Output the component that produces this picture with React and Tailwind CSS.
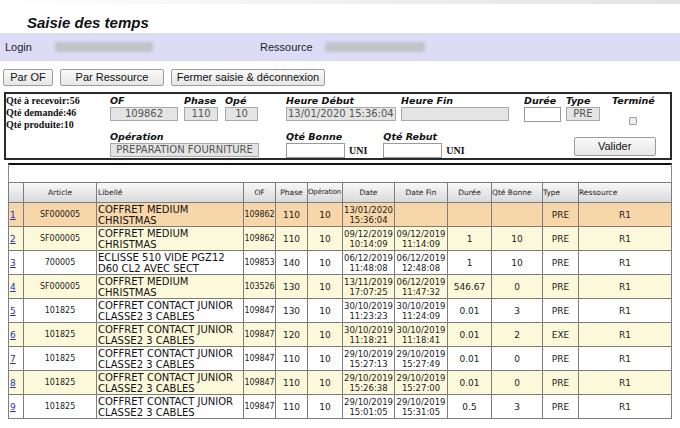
import React from "react";

const rows = [
  ["1", "SF000005", ["COFFRET MEDIUM", "CHRISTMAS"], "109862", "110", "10", ["13/01/2020", "15:36:04"], null, "", "", "PRE", "R1"],
  ["2", "SF000005", ["COFFRET MEDIUM", "CHRISTMAS"], "109862", "110", "10", ["09/12/2019", "10:14:09"], ["09/12/2019", "11:14:09"], "1", "10", "PRE", "R1"],
  ["3", "700005", ["ECLISSE 510 VIDE PGZ12", "D60 CL2 AVEC SECT"], "109853", "140", "10", ["06/12/2019", "11:48:08"], ["06/12/2019", "12:48:08"], "1", "10", "PRE", "R1"],
  ["4", "SF000005", ["COFFRET MEDIUM", "CHRISTMAS"], "103526", "130", "10", ["13/11/2019", "17:07:25"], ["06/12/2019", "11:47:32"], "546.67", "0", "PRE", "R1"],
  ["5", "101825", ["COFFRET CONTACT JUNIOR", "CLASSE2 3 CABLES"], "109847", "130", "10", ["30/10/2019", "11:23:23"], ["30/10/2019", "11:24:09"], "0.01", "3", "PRE", "R1"],
  ["6", "101825", ["COFFRET CONTACT JUNIOR", "CLASSE2 3 CABLES"], "109847", "120", "10", ["30/10/2019", "11:18:21"], ["30/10/2019", "11:18:41"], "0.01", "2", "EXE", "R1"],
  ["7", "101825", ["COFFRET CONTACT JUNIOR", "CLASSE2 3 CABLES"], "109847", "110", "10", ["29/10/2019", "15:27:13"], ["29/10/2019", "15:27:49"], "0.01", "0", "PRE", "R1"],
  ["8", "101825", ["COFFRET CONTACT JUNIOR", "CLASSE2 3 CABLES"], "109847", "110", "10", ["29/10/2019", "15:26:38"], ["29/10/2019", "15:27:00"], "0.01", "0", "PRE", "R1"],
  ["9", "101825", ["COFFRET CONTACT JUNIOR", "CLASSE2 3 CABLES"], "109847", "110", "10", ["29/10/2019", "15:01:05"], ["29/10/2019", "15:31:05"], "0.5", "3", "PRE", "R1"],
];

const lbl = "font-['DejaVu_Sans',sans-serif] font-bold italic text-[9.5px] leading-[11px] text-[#111] whitespace-nowrap";
const greyInput =
  "mt-px h-[14px] border border-[#a9a9a9] bg-[#e4e4e4] font-['DejaVu_Sans',sans-serif] text-[10px] leading-[12px] text-[#555] whitespace-nowrap overflow-hidden";
const whiteInput = "mt-px h-[15px] border border-[#9a9a9a] bg-white";
const serifB = "font-['Liberation_Serif',serif] font-bold text-[10px] leading-[12px] text-[#111] whitespace-nowrap";
const btn =
  "h-[17px] border border-[#9c9c9c] rounded-[2px] bg-linear-to-b from-[#fafafa] to-[#e6e6e6] font-['Liberation_Sans',Arial,sans-serif] text-[11px] leading-[15px] text-[#111] flex items-center justify-center";

const th = "border border-[#7d7d7d] font-['DejaVu_Sans',sans-serif] text-[7.5px] leading-[9px] text-[#222] font-normal whitespace-nowrap overflow-hidden";
const td = "border border-[#7d7d7d] font-['DejaVu_Sans',sans-serif] text-[8.5px] leading-[10px] text-[#1a1a1a] text-center p-0";
const tdSm = "border border-[#7d7d7d] font-['DejaVu_Sans',sans-serif] text-[8px] leading-[10px] text-[#1a1a1a] text-center p-0 whitespace-nowrap";
const tdBig = "border border-[#7d7d7d] font-['DejaVu_Sans',sans-serif] text-[9px] leading-[10px] text-[#1a1a1a] text-center p-0";

function TwoLine({ v }) {
  if (!v) return null;
  return (
    <>
      {v[0]}
      <br />
      {v[1]}
    </>
  );
}

export default function App() {
  return (
    <div className="w-[680px] h-[428px] bg-white overflow-hidden font-['Liberation_Sans',Arial,sans-serif]">
      {/* top shade */}
      <div className="h-[4px] bg-linear-to-r from-white via-[#f0f0f0] to-[#e3e3e3]" />
      {/* title */}
      <div className="h-[29px] pl-[27px] pt-[10px]">
        <div className="font-['Liberation_Sans',Arial,sans-serif] font-bold italic text-[15px] leading-[18px] text-[#111]">
          Saisie des temps
        </div>
      </div>
      {/* login band */}
      <div className="h-[28px] bg-[#dddcf6] flex items-center text-[11px] text-[#222]">
        <span className="ml-[5px] w-[50px]">Login</span>
        <div className="w-[98px] h-[10px] rounded-[3px] bg-[#c2c2c8] blur-[1.5px]" />
        <span className="ml-[107px] w-[65px]">Ressource</span>
        <div className="w-[100px] h-[10px] rounded-[3px] bg-[#c2c2c8] blur-[1.5px]" />
      </div>
      {/* buttons */}
      <div className="mt-[8px] flex pl-[3px]">
        <div className={`${btn} w-[50px]`}>Par OF</div>
        <div className={`${btn} w-[104px] ml-[7px]`}>Par Ressource</div>
        <div className={`${btn} w-[154px] ml-[7px]`}>Fermer saisie &amp; déconnexion</div>
      </div>
      {/* form box */}
      <div className="mt-[6px] ml-[4px] w-[668px] h-[68px] border-2 border-[#2a2a2a] flex">
        <div className="w-[104px] pt-[1px] pl-[0px]">
          <div className={serifB}>Qté à recevoir:56</div>
          <div className={serifB}>Qté demandé:46</div>
          <div className={serifB}>Qté produite:10</div>
        </div>
        <div className="flex flex-col pt-[1px]">
          {/* row 1 */}
          <div className="flex items-start">
            <div className="w-[68px]">
              <div className={lbl}>OF</div>
              <div className={`${greyInput} text-center`}>109862</div>
            </div>
            <div className="w-[34px] ml-[6px]">
              <div className={lbl}>Phase</div>
              <div className={`${greyInput} text-center`}>110</div>
            </div>
            <div className="w-[33px] ml-[7px]">
              <div className={lbl}>Opé</div>
              <div className={`${greyInput} text-center`}>10</div>
            </div>
            <div className="w-[110px] ml-[28px]">
              <div className={lbl}>Heure Début</div>
              <div className={`${greyInput} pl-[1px]`}>13/01/2020 15:36:04</div>
            </div>
            <div className="w-[108px] ml-[5px]">
              <div className={lbl}>Heure Fin</div>
              <div className={greyInput}></div>
            </div>
            <div className="w-[37px] ml-[15px]">
              <div className={lbl}>Durée</div>
              <div className={`${whiteInput} h-[14px]`}></div>
            </div>
            <div className="w-[34px] ml-[5px]">
              <div className={lbl}>Type</div>
              <div className={`${greyInput} text-center`}>PRE</div>
            </div>
            <div className="w-[46px] ml-[12px]">
              <div className={lbl}>Terminé</div>
              <div className="mt-[11px] ml-[17px] w-[8px] h-[8px] border border-[#a0a0a0] bg-[#ececec] rounded-[1px]" />
            </div>
          </div>
          {/* row 2 */}
          <div className="flex items-start mt-[6px]">
            <div className="w-[149px]">
              <div className={lbl}>Opération</div>
              <div className={`${greyInput} text-center`}>PREPARATION FOURNITURE</div>
            </div>
            <div className="ml-[27px]">
              <div className={lbl}>Qté Bonne</div>
              <div className="flex items-center">
                <div className={`${whiteInput} w-[59px]`} />
                <span className={`${serifB} ml-[4px] mt-[2px]`}>UNI</span>
              </div>
            </div>
            <div className="ml-[16px]">
              <div className={lbl}>Qté Rebut</div>
              <div className="flex items-center">
                <div className={`${whiteInput} w-[59px]`} />
                <span className={`${serifB} ml-[4px] mt-[2px]`}>UNI</span>
              </div>
            </div>
            <div className={`${btn} w-[82px] h-[19px] ml-[109px] mt-[6px]`}>Valider</div>
          </div>
        </div>
      </div>
      {/* table */}
      <div className="mt-[3px] ml-[8px] w-[664px]">
        <div className="h-[19px] border-t-2 border-t-[#111] border-x border-x-[#888]" />
        <table className="w-full table-fixed border-collapse">
          <colgroup>
            <col className="w-[15px]" />
            <col className="w-[73px]" />
            <col className="w-[147px]" />
            <col className="w-[32px]" />
            <col className="w-[32px]" />
            <col className="w-[35px]" />
            <col className="w-[52px]" />
            <col className="w-[53px]" />
            <col className="w-[44px]" />
            <col className="w-[51px]" />
            <col className="w-[36px]" />
            <col />
          </colgroup>
          <thead>
            <tr className="h-[20px] bg-linear-to-b from-[#f8f8f8] to-[#d8d8d8]">
              <th className={th}></th>
              <th className={`${th} text-center`}>Article</th>
              <th className={`${th} text-left pl-px`}>Libellé</th>
              <th className={`${th} text-center`}>OF</th>
              <th className={`${th} text-center`}>Phase</th>
              <th className={`${th} text-left text-[7px] tracking-[-0.2px]`}>Opération</th>
              <th className={`${th} text-center`}>Date</th>
              <th className={`${th} text-center`}>Date Fin</th>
              <th className={`${th} text-center`}>Durée</th>
              <th className={`${th} text-left`}>Qté Bonne</th>
              <th className={`${th} text-left`}>Type</th>
              <th className={`${th} text-left`}>Ressource</th>
            </tr>
          </thead>
          <tbody>
            {rows.map((r, i) => {
              const bg = i === 0 ? "bg-[#f7d6a9]" : i % 2 === 1 ? "bg-[#fcf9da]" : "bg-white";
              return (
                <tr key={i} className={`h-[24px] ${bg}`}>
                  <td className={`${td} text-left pl-[1px]`}>
                    <a href="#" className="text-[9px] text-[#2630b8] underline">
                      {r[0]}
                    </a>
                  </td>
                  <td className={tdSm}>{r[1]}</td>
                  <td className="border border-[#7d7d7d] font-['DejaVu_Sans',sans-serif] text-[10px] leading-[11px] text-[#111] text-left pl-[1px] whitespace-nowrap overflow-hidden">
                    <TwoLine v={r[2]} />
                  </td>
                  <td className={`${tdSm} tracking-[-0.1px]`}>{r[3]}</td>
                  <td className={tdBig}>{r[4]}</td>
                  <td className={tdBig}>{r[5]}</td>
                  <td className={td}>
                    <TwoLine v={r[6]} />
                  </td>
                  <td className={td}>
                    <TwoLine v={r[7]} />
                  </td>
                  <td className={tdBig}>{r[8]}</td>
                  <td className={tdBig}>{r[9]}</td>
                  <td className={tdBig}>{r[10]}</td>
                  <td className={tdBig}>{r[11]}</td>
                </tr>
              );
            })}
          </tbody>
        </table>
      </div>
    </div>
  );
}
